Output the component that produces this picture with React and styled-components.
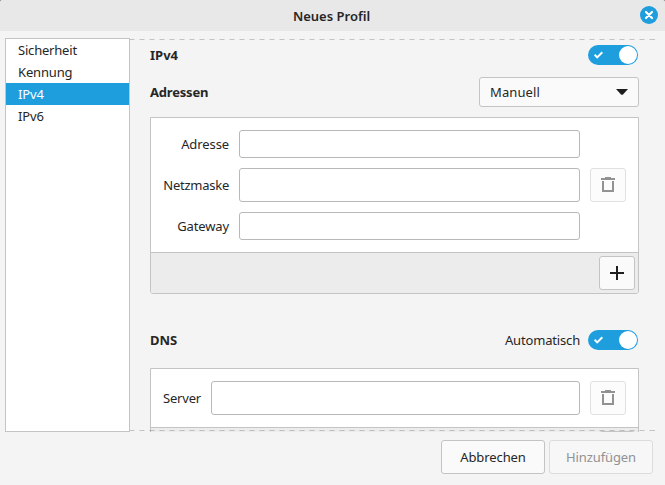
import React from "react";
import styled, { createGlobalStyle } from "styled-components";

const GlobalStyle = createGlobalStyle`
  * { box-sizing: border-box; }
  body {
    margin: 0;
    background: #8c8c8c;
    overflow: hidden;
    font-family: "Noto Sans", "Open Sans", sans-serif;
    font-size: 13px;
    line-height: 18px;
    color: #262626;
  }
`;

const Dialog = styled.div`
  display: flex;
  flex-direction: column;
  width: 665px;
  height: 485px;
  background: #f4f4f4;
  border-radius: 3px 3px 0 0;
  overflow: hidden;
`;

const TitleBar = styled.header`
  display: grid;
  grid-template-columns: 1fr auto 1fr;
  align-items: center;
  flex: none;
  height: 31px;
  padding: 0 7px 0 5px;
  background: #e8e8e8;
`;

const CloseButton = styled.button`
  grid-column: 3;
  justify-self: end;
  display: flex;
  width: 18px;
  height: 18px;
  margin-bottom: 1px;
  padding: 0;
  border: 0;
  border-radius: 50%;
  background: #1f9ede;
`;

const Text = styled.span`
  display: block;
  white-space: nowrap;
  font-weight: ${(p) => p.$weight || 400};
  letter-spacing: ${(p) => p.$track || 0}px;
`;

const Title = styled(Text)`
  grid-column: 2;
`;

const Body = styled.div`
  display: flex;
  flex: none;
  height: 401px;
  padding: 7px 10px 0 5px;
`;

const Sidebar = styled.nav`
  flex: none;
  width: 125px;
  height: 394px;
  border: 1px solid #c4c4c4;
  background: #fff;
`;

const SidebarItem = styled.div`
  height: 22px;
  padding: 2px 12px;
  background: ${(p) => (p.$active ? "#1f9ede" : "transparent")};
  color: ${(p) => (p.$active ? "#fff" : "#262626")};
`;

const ScrollArea = styled.main`
  position: relative;
  flex: 1;
  height: 394px;
  padding: 7px 16px 0 20px;
  overflow: hidden;
`;

const OverflowHint = styled.div`
  position: absolute;
  left: 0;
  right: 0;
  ${(p) => p.$edge}: 1px;
  height: 1px;
  background: repeating-linear-gradient(
    90deg,
    rgba(0, 0, 0, 0.2) 0 5px,
    transparent 5px 10px
  );
  background-position-x: -0.5px;
`;

const SectionRow = styled.div`
  display: flex;
  align-items: center;
  justify-content: space-between;
  height: ${(p) => p.$height}px;
  margin-bottom: ${(p) => p.$gap}px;
  padding-right: ${(p) => p.$inset || 0}px;
`;

const Inline = styled.div`
  display: flex;
  align-items: center;
  gap: 8px;
`;

const Track = styled.div`
  display: flex;
  align-items: center;
  justify-content: space-between;
  width: 50px;
  height: 20px;
  padding: 1px 1px 1px 6px;
  border-radius: 10px;
  background: #1f9ede;
`;

const Knob = styled.div`
  width: 18px;
  height: 18px;
  border-radius: 50%;
  background: #fff;
`;

const Select = styled.div`
  display: flex;
  align-items: center;
  justify-content: space-between;
  width: 160px;
  height: 30px;
  padding: 0 10px;
  border: 1px solid #c4c4c4;
  border-radius: 3px;
  background: #fafafa;
`;

const Frame = styled.section`
  width: 489px;
  margin-bottom: ${(p) => p.$gap || 0}px;
  border: 1px solid #c4c4c4;
  border-radius: 0 0 3px 3px;
  background: #fff;
  overflow: hidden;
`;

const Fields = styled.div`
  display: grid;
  grid-template-columns: ${(p) => p.$label}px 1fr 36px;
  grid-template-rows: ${(p) => p.$rows};
  gap: 10px;
  align-items: center;
  padding: 12px;
`;

const FieldLabel = styled(Text)`
  justify-self: end;
  grid-column: 1;
`;

const Field = styled.input`
  grid-column: 2;
  width: 100%;
  height: 100%;
  border: 1px solid #b8b8b8;
  border-radius: 3px;
  background: #fff;
`;

const IconButton = styled.button`
  grid-column: 3;
  display: flex;
  align-items: center;
  justify-content: center;
  width: 36px;
  height: 34px;
  padding: 0;
  border: 1px solid ${(p) => (p.$disabled ? "#e1e1e1" : "#c4c4c4")};
  border-radius: 3px;
  background: ${(p) => (p.$disabled ? "#fcfcfc" : "#fafafa")};
`;

const FrameFooter = styled.div`
  display: flex;
  justify-content: flex-end;
  height: 41px;
  padding: 3px;
  border-top: 1px solid #c4c4c4;
  background: #ececec;
`;

const Actions = styled.footer`
  display: flex;
  justify-content: flex-end;
  gap: 4px;
  padding: 8px 12px 0;
`;

const ActionButton = styled.button`
  display: flex;
  align-items: center;
  justify-content: center;
  width: 104px;
  height: 34px;
  padding: 0;
  border: 1px solid ${(p) => (p.$disabled ? "#dcdcdc" : "#c4c4c4")};
  border-radius: 3px;
  background: ${(p) => (p.$disabled ? "#f7f7f7" : "#fafafa")};
  color: ${(p) => (p.$disabled ? "#929292" : "#262626")};
  font: inherit;
`;

const TrashIcon = () => (
  <svg width="14" height="16" fill="#929292" shapeRendering="crispEdges">
    <path d="M4 0h6v1h4v2H0V1h4z" />
    <path d="M1 4h2v9h8V4h2v11H1z" />
  </svg>
);

const PlusIcon = () => (
  <svg width="14" height="14" fill="#1e1e1e" shapeRendering="crispEdges">
    <path d="M6 0h2v6h6v2H8v6H6V8H0V6h6z" />
  </svg>
);

const Switch = () => (
  <Track>
    <svg width="9" height="8" fill="none" stroke="#fff" strokeWidth="2">
      <path d="M0.6 3.8L3.2 6.4L8.3 1.3" />
    </svg>
    <Knob />
  </Track>
);

const sections = [
  { name: "Sicherheit", track: -0.2 },
  { name: "Kennung", track: -0.15 },
  { name: "IPv4", track: -0.1, active: true },
  { name: "IPv6", track: -0.1 },
];

const addressFields = [
  { name: "Adresse", track: -0.1 },
  { name: "Netzmaske", track: -0.25 },
  { name: "Gateway", track: -0.12 },
];

export default function App() {
  return (
    <>
      <GlobalStyle />
      <Dialog>
        <TitleBar>
          <Title $weight={600}>Neues Profil</Title>
          <CloseButton aria-label="Schließen">
            <svg width="18" height="18" stroke="#fff" strokeWidth="2.2" strokeLinecap="round">
              <path d="M6 6l6 6M12 6l-6 6" />
            </svg>
          </CloseButton>
        </TitleBar>
        <Body>
          <Sidebar>
            {sections.map((s) => (
              <SidebarItem key={s.name} $active={s.active}>
                <Text $track={s.track}>{s.name}</Text>
              </SidebarItem>
            ))}
          </Sidebar>
          <ScrollArea>
            <SectionRow $height={20} $gap={12} $inset={1}>
              <Text $weight={700}>IPv4</Text>
              <Switch />
            </SectionRow>
            <SectionRow $height={30} $gap={10}>
              <Text $weight={700} $track={-0.2}>Adressen</Text>
              <Select>
                <Text $track={0.1}>Manuell</Text>
                <svg width="12" height="6" fill="#1e1e1e">
                  <path d="M0 0h12l-5 5.4q-1 .9-2 0z" />
                </svg>
              </Select>
            </SectionRow>
            <Frame $gap={36}>
              <Fields $label={66} $rows="28px 34px 28px">
                {addressFields.map(({ name, track }, row) => (
                  <React.Fragment key={name}>
                    <FieldLabel $track={track}>{name}</FieldLabel>
                    <Field aria-label={name} />
                    {row === 1 && (
                      <IconButton $disabled aria-label="Entfernen">
                        <TrashIcon />
                      </IconButton>
                    )}
                  </React.Fragment>
                ))}
              </Fields>
              <FrameFooter>
                <IconButton aria-label="Neu">
                  <PlusIcon />
                </IconButton>
              </FrameFooter>
            </Frame>
            <SectionRow $height={20} $gap={18} $inset={1}>
              <Text $weight={700}>DNS</Text>
              <Inline>
                <Text $track={-0.17}>Automatisch</Text>
                <Switch />
              </Inline>
            </SectionRow>
            <Frame>
              <Fields $label={38} $rows="34px">
                <FieldLabel $track={-0.2}>Server</FieldLabel>
                <Field aria-label="Server" />
                <IconButton $disabled aria-label="Entfernen">
                  <TrashIcon />
                </IconButton>
              </Fields>
              <FrameFooter>
                <IconButton aria-label="Neu">
                  <PlusIcon />
                </IconButton>
              </FrameFooter>
            </Frame>
            <OverflowHint $edge="top" />
            <OverflowHint $edge="bottom" />
          </ScrollArea>
        </Body>
        <Actions>
          <ActionButton>
            <Text $track={-0.1}>Abbrechen</Text>
          </ActionButton>
          <ActionButton $disabled>
            <Text $track={-0.12}>Hinzufügen</Text>
          </ActionButton>
        </Actions>
      </Dialog>
    </>
  );
}
